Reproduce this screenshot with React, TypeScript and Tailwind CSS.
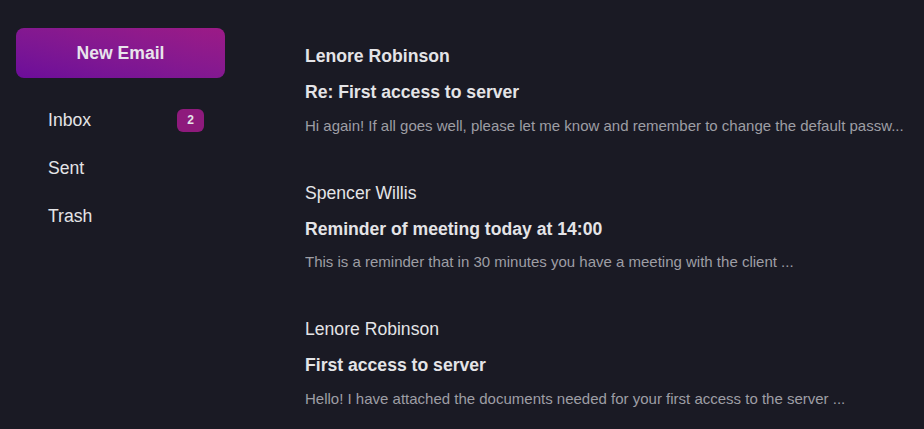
const folders = [
  { name: "Inbox", count: 2 },
  { name: "Sent" },
  { name: "Trash" },
];

const emails = [
  {
    from: "Lenore Robinson",
    subject: "Re: First access to server",
    preview:
      "Hi again! If all goes well, please let me know and remember to change the default passw...",
    unread: true,
  },
  {
    from: "Spencer Willis",
    subject: "Reminder of meeting today at 14:00",
    preview: "This is a reminder that in 30 minutes you have a meeting with the client ...",
    unread: false,
  },
  {
    from: "Lenore Robinson",
    subject: "First access to server",
    preview:
      "Hello! I have attached the documents needed for your first access to the server ...",
    unread: false,
  },
];

const App = () => {
  return (
    <div className="h-screen overflow-hidden bg-[#1a1a24] text-[#e4e4e7] font-['Liberation_Sans',Arial,sans-serif] flex">
      {/* sidebar */}
      <aside className="w-[241px] shrink-0 px-4 pt-7">
        <button className="w-[209px] h-[50px] rounded-lg bg-gradient-to-tr from-[#6c0c9a] to-[#9c1a86] text-[17.6px] font-bold text-[#e8e4ec]">
          New Email
        </button>
        <ul className="mt-[18px]">
          {folders.map((f) => (
            <li
              key={f.name}
              className="h-12 flex items-center justify-between pl-8 pr-[21px] text-[17.6px]"
            >
              <span>{f.name}</span>
              {f.count && (
                <span className="w-[27px] h-[23px] rounded-md bg-[#8e1a7c] text-xs font-bold flex items-center justify-center">
                  {f.count}
                </span>
              )}
            </li>
          ))}
        </ul>
      </aside>

      {/* mail list */}
      <main className="flex-1 min-w-0 pl-16 pt-[44px] pr-5 flex flex-col gap-[43px]">
        {emails.map((e, i) => (
          <div key={i}>
            <div className={`text-[17.6px] leading-6 ${e.unread ? "font-bold" : ""}`}>
              {e.from}
            </div>
            <div className="mt-[12px] text-[17.6px] leading-6 font-bold">{e.subject}</div>
            <p className="mt-[9.5px] text-[15px] leading-6 text-[#9e9ea4] truncate">
              {e.preview}
            </p>
          </div>
        ))}
      </main>
    </div>
  );
};

export default App;
